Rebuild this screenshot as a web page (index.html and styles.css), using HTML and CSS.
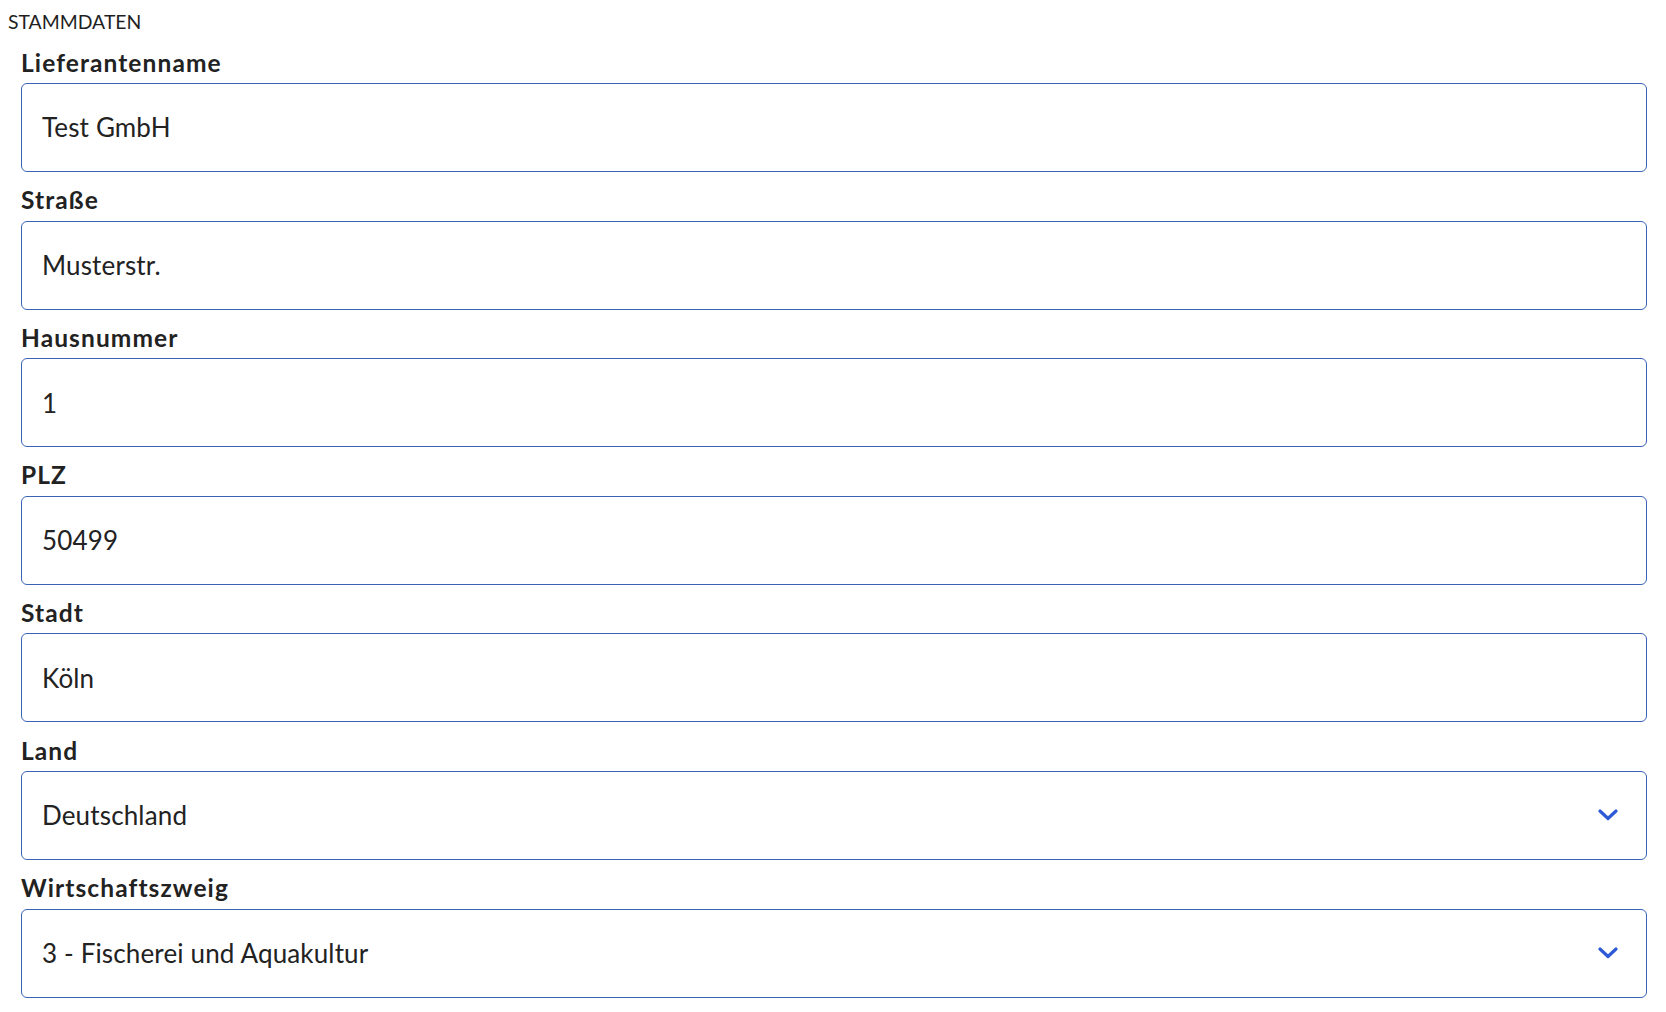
FILE: index.html
```html
<!DOCTYPE html>
<html lang="de">
<head>
<meta charset="utf-8">
<title>Stammdaten</title>
<link rel="stylesheet" href="styles.css">
</head>
<body>
<div class="section-title">STAMMDATEN</div>
<form class="form">
  <div class="group">
    <label class="label">Lieferantenname</label>
    <div class="field"><span class="value">Test GmbH</span></div>
  </div>
  <div class="group">
    <label class="label">Straße</label>
    <div class="field"><span class="value">Musterstr.</span></div>
  </div>
  <div class="group">
    <label class="label">Hausnummer</label>
    <div class="field"><span class="value">1</span></div>
  </div>
  <div class="group">
    <label class="label">PLZ</label>
    <div class="field"><span class="value">50499</span></div>
  </div>
  <div class="group">
    <label class="label">Stadt</label>
    <div class="field"><span class="value">Köln</span></div>
  </div>
  <div class="group">
    <label class="label">Land</label>
    <div class="field select"><span class="value">Deutschland</span>
      <svg class="chevron" width="20" height="12" viewBox="0 0 20 12"><polyline points="2,2 10,9.5 18,2" fill="none" stroke="currentColor" stroke-width="3.2" stroke-linecap="round" stroke-linejoin="round"/></svg>
    </div>
  </div>
  <div class="group">
    <label class="label">Wirtschaftszweig</label>
    <div class="field select"><span class="value">3 - Fischerei und Aquakultur</span>
      <svg class="chevron" width="20" height="12" viewBox="0 0 20 12"><polyline points="2,2 10,9.5 18,2" fill="none" stroke="currentColor" stroke-width="3.2" stroke-linecap="round" stroke-linejoin="round"/></svg>
    </div>
  </div>
</form>
</body>
</html>
```

FILE: styles.css
```css
html, body {
  margin: 0;
  padding: 0;
  background: #ffffff;
}
body {
  font-family: Lato, "Noto Sans", "Liberation Sans", sans-serif;
  color: #222222;
}
.section-title {
  font-size: 19.4px;
  line-height: 28px;
  padding: 8px 0 0 8px;
  color: #1f1f1f;
}
.form {
  display: flex;
  flex-direction: column;
  gap: 12.3px;
  padding: 10.7px 19px 0 21px;
}
.group {
  display: flex;
  flex-direction: column;
}
.label {
  font-size: 24.5px;
  font-weight: 700;
  letter-spacing: 1.1px;
  line-height: 32px;
  margin-bottom: 4.3px;
  color: #222222;
}
.field {
  box-sizing: border-box;
  height: 89px;
  border: 1px solid #3a63b8;
  border-radius: 6px;
  padding: 0 28px 0 20px;
  display: flex;
  align-items: center;
  justify-content: space-between;
  font-size: 26px;
  letter-spacing: 0.15px;
  color: #222222;
}
.chevron {
  color: #2f5ad6;
  flex: none;
}
```
